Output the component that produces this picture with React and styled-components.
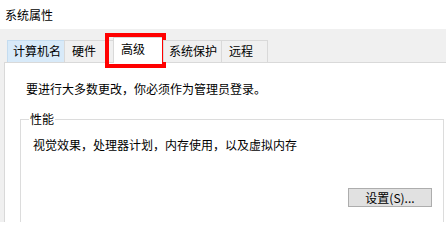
import React from "react";
import styled, { createGlobalStyle } from "styled-components";

const GlobalStyle = createGlobalStyle`
  html, body {
    margin: 0;
    padding: 0;
    background: #ffffff;
  }
  body {
    font-family: "Noto Sans CJK SC", "Noto Sans", sans-serif;
    font-size: 12px;
    color: #000;
    overflow: hidden;
  }
`;

const Window = styled.div`
  display: flex;
  flex-direction: column;
  width: 446px;
  height: 222px;
  overflow: hidden;
`;

const TitleBar = styled.div`
  flex: none;
  height: 29px;
  padding-left: 5px;
  line-height: 29px;
  background: #ffffff;
`;

const Body = styled.div`
  flex: 1;
  display: flex;
  flex-direction: column;
  background: #f0f0f0;
  padding: 8px 0 0 4px;
`;

const TabStrip = styled.div`
  flex: none;
  display: flex;
  align-items: flex-end;
  height: 25px;
  padding-left: 3px;
  position: relative;
  z-index: 1;
`;

const Tab = styled.div`
  box-sizing: border-box;
  width: ${({ $w }) => $w}px;
  height: ${({ $active }) => ($active ? 26 : 22)}px;
  margin-left: -1px;
  margin-bottom: ${({ $active }) => ($active ? -1 : 0)}px;
  padding-left: ${({ $pad }) => $pad}px;
  line-height: ${({ $active }) => ($active ? 22 : 20)}px;
  border: 1px solid #d9d9d9;
  border-bottom: none;
  background: ${({ $active, $hover }) =>
    $active ? "#ffffff" : $hover ? "#d8eaf9" : "#f0f0f0"};
  border-color: ${({ $hover }) => ($hover ? "#c4dcf0" : "#d9d9d9")};
  white-space: nowrap;
  position: relative;
  &:first-child {
    margin-left: 0;
  }
`;

const Highlight = styled.span`
  position: absolute;
  left: -9px;
  top: -5px;
  width: 53px;
  height: 27px;
  border: 4px solid #ff0000;
  pointer-events: none;
`;

const Panel = styled.div`
  flex: 1;
  background: #ffffff;
  border: 1px solid #d9d9d9;
  border-right: none;
  border-bottom: none;
  padding: 18px 2px 0 15px;
`;

const Notice = styled.div`
  line-height: 16px;
  padding-left: 6px;
`;

const GroupBox = styled.fieldset`
  margin: 14px 0 0 0;
  padding: 0;
  border: 1px solid #dcdcdc;
  min-width: 0;
  display: flex;
  flex-direction: column;
`;

const Legend = styled.legend`
  margin-left: 8px;
  padding: 0 1px;
  line-height: 16px;
`;

const Description = styled.div`
  padding: 10px 0 0 12px;
  line-height: 16px;
`;

const ButtonRow = styled.div`
  display: flex;
  justify-content: flex-end;
  padding: 35px 11px 40px 0;
`;

const Button = styled.button`
  box-sizing: border-box;
  width: 84px;
  height: 19px;
  padding: 0;
  border: 1px solid #adadad;
  background: #e1e1e1;
  font: inherit;
  font-size: 12px;
  line-height: 17px;
  color: #000;
`;

const tabs = [
  { label: "计算机名", w: 58, pad: 5, hover: true },
  { label: "硬件", w: 50, pad: 7 },
  { label: "高级", w: 51, pad: 7, active: true },
  { label: "系统保护", w: 59, pad: 5 },
  { label: "远程", w: 47, pad: 7 },
];

export default function App() {
  return (
    <Window>
      <GlobalStyle />
      <TitleBar>系统属性</TitleBar>
      <Body>
        <TabStrip>
          {tabs.map((t) => (
            <Tab
              key={t.label}
              $w={t.w}
              $pad={t.pad}
              $active={t.active}
              $hover={t.hover}
            >
              {t.label}
              {t.active && <Highlight />}
            </Tab>
          ))}
        </TabStrip>
        <Panel>
          <Notice>要进行大多数更改，你必须作为管理员登录。</Notice>
          <GroupBox>
            <Legend>性能</Legend>
            <Description>视觉效果，处理器计划，内存使用，以及虚拟内存</Description>
            <ButtonRow>
              <Button>设置(S)...</Button>
            </ButtonRow>
          </GroupBox>
        </Panel>
      </Body>
    </Window>
  );
}
